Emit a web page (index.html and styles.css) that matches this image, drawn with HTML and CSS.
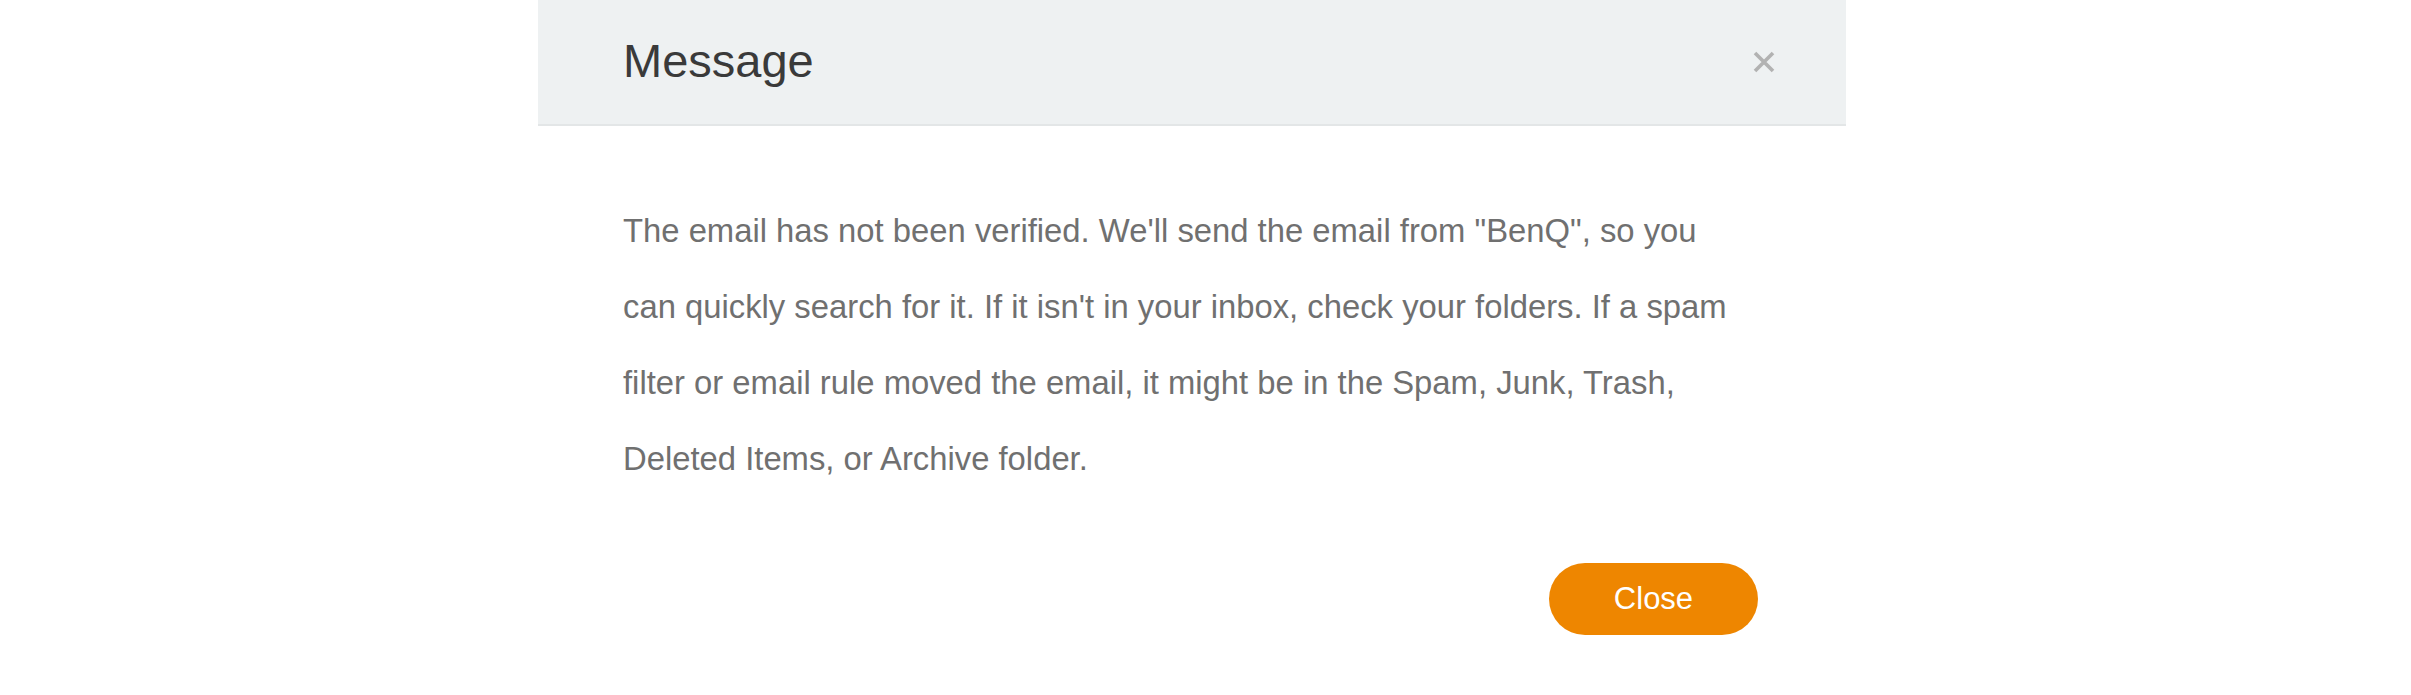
FILE: index.html
```html
<!DOCTYPE html>
<html>
<head>
<meta charset="utf-8">
<link rel="stylesheet" href="styles.css">
</head>
<body>
<div class="modal">
  <div class="modal-header">
    <h2 class="modal-title">Message</h2>
    <svg class="modal-x" width="22" height="22" viewBox="0 0 22 22" aria-label="close">
      <path d="M2 2 L20 20 M20 2 L2 20" stroke="#b2b2b2" stroke-width="3.6" stroke-linecap="butt" fill="none"/>
    </svg>
  </div>
  <div class="modal-body">
    <p class="modal-text">The email has not been verified. We'll send the email from "BenQ", so you can quickly search for it. If it isn't in your inbox, check your folders. If a spam filter or email rule moved the email, it might be in the Spam, Junk, Trash, Deleted Items, or Archive folder.</p>
  </div>
  <div class="modal-footer">
    <button class="btn-close">Close</button>
  </div>
</div>
</body>
</html>
```
FILE: styles.css
```css
html, body {
  margin: 0;
  padding: 0;
  background: #ffffff;
  font-family: "Liberation Sans", Arial, sans-serif;
}
.modal {
  width: 1308px;
  margin-left: 538px;
  background: #ffffff;
}
.modal-header {
  height: 124px;
  background: #eef1f2;
  border-bottom: 2px solid #e3e6e7;
  display: flex;
  align-items: center;
  justify-content: space-between;
  padding: 0 71px 0 85px;
}
.modal-title {
  margin: 0 0 3px 0;
  font-size: 47px;
  font-weight: normal;
  color: #3a3a3a;
  line-height: 1;
}
.modal-x {
  display: block;
}
.modal-body {
  padding: 67px 103px 0 85px;
}
.modal-text {
  margin: 0;
  font-size: 32.8px;
  line-height: 76px;
  color: #707070;
}
.modal-footer {
  display: flex;
  justify-content: flex-end;
  padding: 66px 88px 0 0;
}
.btn-close {
  width: 209px;
  height: 72px;
  border: none;
  border-radius: 36px;
  background: #ee8600;
  color: #ffffff;
  font-family: "Liberation Sans", Arial, sans-serif;
  font-size: 31px;
  padding: 0;
}
```
